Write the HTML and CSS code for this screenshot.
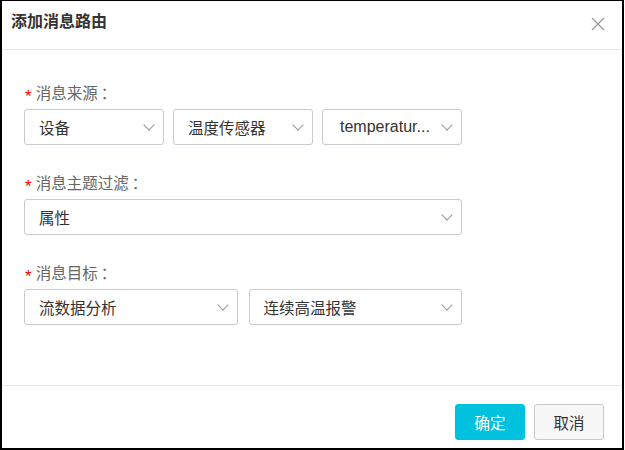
FILE: index.html
```html
<!DOCTYPE html>
<html lang="zh-CN">
<head>
  <meta charset="UTF-8">
  <title>添加消息路由</title>
  <meta name="viewport" content="width=device-width,initial-scale=1">
  <link rel="stylesheet" href="styles.css">
</head>
<body>

<div class="dialog">
  <div class="dialog-head">
    <h2>添加消息路由</h2>
    <span class="close">
      <svg width="14" height="14" viewBox="0 0 14 14"><path d="M1 1L13 13M13 1L1 13" stroke="#999" stroke-width="1.2" fill="none"/></svg>
    </span>
  </div>

  <div class="dialog-body">
    <!-- 消息来源 -->
    <div class="form-item">
      <label><i>*</i>消息来源<span class="colon">：</span></label>
      <div class="row row-3">
        <div class="select"><span>设备</span><b class="arrow"></b></div>
        <div class="select"><span>温度传感器</span><b class="arrow"></b></div>
        <div class="select latin"><span>temperatur...</span><b class="arrow"></b></div>
      </div>
    </div>

    <!-- 消息主题过滤 -->
    <div class="form-item">
      <label><i>*</i>消息主题过滤<span class="colon">：</span></label>
      <div class="row">
        <div class="select"><span>属性</span><b class="arrow"></b></div>
      </div>
    </div>

    <!-- 消息目标 -->
    <div class="form-item">
      <label><i>*</i>消息目标<span class="colon">：</span></label>
      <div class="row row-2">
        <div class="select"><span>流数据分析</span><b class="arrow"></b></div>
        <div class="select"><span>连续高温报警</span><b class="arrow"></b></div>
      </div>
    </div>
  </div>

  <div class="dialog-foot">
    <button class="btn btn-primary">确定</button>
    <button class="btn">取消</button>
  </div>
</div>

</body>
</html>
```

FILE: styles.css
```css
body { margin: 0; font-family: "Liberation Sans", "Noto Sans CJK SC", sans-serif; background: #fff; }

.dialog {
  width: 624px;
  height: 450px;
  box-sizing: border-box;
  border-style: solid;
  border-color: #000;
  border-width: 1px 2px 2px 2px;
  display: flex;
  flex-direction: column;
  background: #fff;
}

.dialog-head {
  height: 49px;
  box-sizing: border-box;
  border-bottom: 1px solid #e8e8e8;
  padding: 0 17px 0 9px;
  display: flex;
  align-items: center;
  justify-content: space-between;
}
.dialog-head h2 { margin: 0 0 6px; font-size: 16px; font-weight: bold; color: #333; line-height: 22px; }
.close { display: flex; margin-bottom: 3px; }

.dialog-body { flex: 1; padding: 34px 22px 0; }

.form-item { margin-bottom: 29px; width: 438px; }
.form-item label {
  display: flex;
  align-items: center;
  height: 20px;
  font-size: 15.5px;
  line-height: 20px;
  color: #666;
  margin-bottom: 5px;
}
.form-item label i {
  font-style: normal;
  font-size: 17px;
  line-height: 10px;
  height: 10px;
  padding-top: 6px;
  color: #f00;
  margin: 0 4px 0 1px;
}
.form-item label .colon { margin-left: 3px; }

.row { display: grid; grid-template-columns: 1fr; }
.row-3 { grid-template-columns: 1fr 1fr 1fr; column-gap: 9px; }
.row-2 { grid-template-columns: 1fr 1fr; column-gap: 11px; }

.select {
  height: 36px;
  box-sizing: border-box;
  border: 1px solid #c8cad0;
  border-radius: 3px;
  padding: 0 10px 0 14px;
  display: flex;
  align-items: center;
  justify-content: space-between;
  font-size: 15.5px;
  color: #333;
}
.select.latin { padding-left: 17px; font-size: 16px; }

.arrow {
  width: 7px;
  height: 7px;
  border-right: 1px solid #999;
  border-bottom: 1px solid #999;
  transform: rotate(45deg);
  margin-top: -4px;
}

.dialog-foot {
  height: 63px;
  box-sizing: border-box;
  border-top: 1px solid #e8e8e8;
  padding: 18px 18px 0 0;
  display: flex;
  justify-content: flex-end;
  align-items: flex-start;
  gap: 9px;
}

.btn {
  width: 70px;
  height: 36px;
  border: 1px solid #c8cad0;
  border-radius: 3px;
  background: #f7f7f7;
  color: #333;
  font-family: inherit;
  font-size: 15.5px;
  padding: 0;
}
.btn-primary { background: #00c1de; border-color: #00c1de; color: #fff; }
```
